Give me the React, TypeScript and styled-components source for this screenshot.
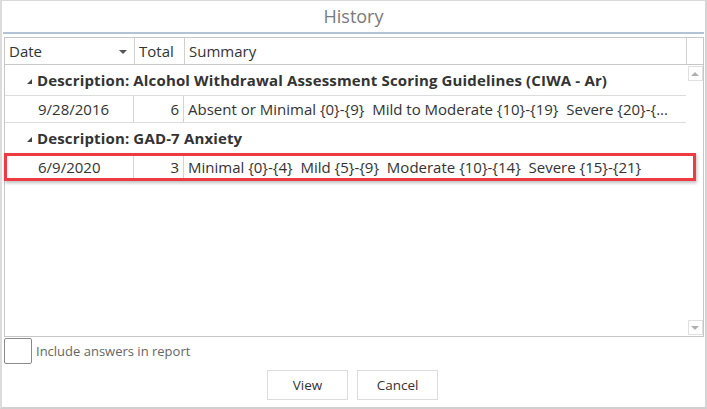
import React from "react";
import styled, { createGlobalStyle } from "styled-components";

const Global = createGlobalStyle`
  html, body { margin: 0; padding: 0; background: #fff; }
  body { font-family: "Open Sans", "Noto Sans", sans-serif; color: #333; }
  * { box-sizing: border-box; }
`;

const Dialog = styled.div`
  width: 707px;
  height: 409px;
  border-top: 1px solid #d9d9d9;
  border-left: 2px solid #dcdcdc;
  border-right: 2px solid #d4d4d4;
  border-bottom: 2px solid #d0d0d0;
  background: #fff;
  display: flex;
  flex-direction: column;
`;

const TitleBar = styled.div`
  height: 33px;
  margin: 0 1px 0 1px;
  border-bottom: 2px solid #b3c2d4;
  display: flex;
  align-items: center;
  justify-content: center;
  font-size: 18px;
  color: #7a7a7a;
  padding-bottom: 1px;
`;

const Grid = styled.div`
  margin: 3px 0 0 2px;
  width: 700px;
  height: 300px;
  border: 1px solid #c6c6c6;
  display: flex;
  flex-direction: column;
`;

const HeaderRow = styled.div`
  height: 27px;
  display: flex;
  border-bottom: 1px solid #c8c8c8;
`;

const HeaderCell = styled.div<{ $w: number; $last?: boolean }>`
  width: ${(p) => p.$w}px;
  flex: none;
  display: flex;
  align-items: center;
  padding-left: 4px;
  font-size: 15px;
  color: #333;
  border-right: ${(p) => (p.$last ? "none" : "1px solid #d0d0d0")};
  position: relative;
`;

const SortArrow = styled.span`
  position: absolute;
  right: 7px;
  top: 12px;
  width: 0;
  height: 0;
  border-left: 4px solid transparent;
  border-right: 4px solid transparent;
  border-top: 4px solid #555;
`;

const Body = styled.div`
  flex: 1;
  display: flex;
`;

const Rows = styled.div`
  width: 681px;
  flex: none;
  display: flex;
  flex-direction: column;
`;

const GroupRow = styled.div<{ $h: number }>`
  height: ${(p) => p.$h}px;
  display: flex;
  align-items: center;
  padding-left: 22px;
  font-weight: 700;
  font-size: 15px;
  letter-spacing: 0.15px;
  color: #333;
  gap: 5px;
`;

const GroupArrow = styled.span`
  width: 0;
  height: 0;
  border-left: 5px solid transparent;
  border-bottom: 5px solid #444;
  margin-top: 2px;
`;

const DataRow = styled.div<{ $selected?: boolean }>`
  height: 28px;
  display: flex;
  border-top: 1px solid #dcdcdc;
  border-bottom: 1px solid #dcdcdc;
  position: relative;
  &::after {
    content: "";
    display: ${(p) => (p.$selected ? "block" : "none")};
    position: absolute;
    left: -1px;
    right: -10px;
    top: -1px;
    bottom: -1px;
    border: 3px solid #ee3a41;
    box-shadow: 1px 2px 3px rgba(0, 0, 0, 0.25);
    pointer-events: none;
  }
`;

const Cell = styled.div<{ $w?: number; $align?: string; $pl?: number }>`
  width: ${(p) => (p.$w ? `${p.$w}px` : "auto")};
  flex: ${(p) => (p.$w ? "none" : "1")};
  min-width: 0;
  display: flex;
  align-items: center;
  justify-content: ${(p) => p.$align || "flex-start"};
  padding-left: ${(p) => p.$pl ?? 4}px;
  padding-right: 4px;
  font-size: 15px;
  color: #333;
  border-right: ${(p) => (p.$w ? "1px solid #d4d4d4" : "none")};
  white-space: pre;
`;

const ScrollCol = styled.div`
  flex: 1;
  display: flex;
  flex-direction: column;
  justify-content: space-between;
  align-items: center;
  padding: 1px 0 1px 1px;
`;

const ScrollBtn = styled.div<{ $down?: boolean }>`
  width: 15px;
  height: 15px;
  border: 1px solid #e0e0e0;
  display: flex;
  align-items: center;
  justify-content: center;
  &::before {
    content: "";
    width: 0;
    height: 0;
    border-left: 4px solid transparent;
    border-right: 4px solid transparent;
    ${(p) =>
      p.$down
        ? "border-top: 4px solid #b0b0b0;"
        : "border-bottom: 4px solid #b0b0b0;"}
  }
`;

const OptionRow = styled.div`
  display: flex;
  align-items: center;
  gap: 4px;
  margin: 1px 0 0 2px;
  height: 26px;
`;

const CheckBox = styled.div`
  width: 28px;
  height: 26px;
  border: 1px solid #8a8a8a;
  border-radius: 2px;
  background: #fff;
`;

const OptionLabel = styled.span`
  font-size: 13px;
  color: #666;
`;

const ButtonRow = styled.div`
  display: flex;
  justify-content: center;
  gap: 9px;
  margin-top: 6px;
  padding-right: 2px;
`;

const Button = styled.button`
  width: 81px;
  height: 30px;
  border: 1px solid #dcdcdc;
  background: #fff;
  font-family: "Open Sans", "Noto Sans", sans-serif;
  font-size: 13.5px;
  color: #333;
  padding: 0;
`;

export default function App() {
  return (
    <>
      <Global />
      <Dialog>
        <TitleBar>History</TitleBar>
        <Grid>
          <HeaderRow>
            <HeaderCell $w={130}>
              Date
              <SortArrow />
            </HeaderCell>
            <HeaderCell $w={50}>Total</HeaderCell>
            <HeaderCell $w={502}>Summary</HeaderCell>
            <HeaderCell $w={16} $last />
          </HeaderRow>
          <Body>
            <Rows>
              <GroupRow $h={30}>
                <GroupArrow />
                Description: Alcohol Withdrawal Assessment Scoring Guidelines (CIWA - Ar)
              </GroupRow>
              <DataRow>
                <Cell $w={129} $pl={33}>9/28/2016</Cell>
                <Cell $w={50} $align="flex-end">6</Cell>
                <Cell>
                  Absent or Minimal {"{0}-{9}"}  Mild to Moderate {"{10}-{19}"}  Severe {"{20}-{..."}
                </Cell>
              </DataRow>
              <GroupRow $h={30}>
                <GroupArrow />
                Description: GAD-7 Anxiety
              </GroupRow>
              <DataRow $selected>
                <Cell $w={129} $pl={33}>6/9/2020</Cell>
                <Cell $w={50} $align="flex-end">3</Cell>
                <Cell>
                  Minimal {"{0}-{4}"}  Mild {"{5}-{9}"}  Moderate {"{10}-{14}"}  Severe {"{15}-{21}"}
                </Cell>
              </DataRow>
            </Rows>
            <ScrollCol>
              <ScrollBtn />
              <ScrollBtn $down />
            </ScrollCol>
          </Body>
        </Grid>
        <OptionRow>
          <CheckBox />
          <OptionLabel>Include answers in report</OptionLabel>
        </OptionRow>
        <ButtonRow>
          <Button>View</Button>
          <Button>Cancel</Button>
        </ButtonRow>
      </Dialog>
    </>
  );
}
